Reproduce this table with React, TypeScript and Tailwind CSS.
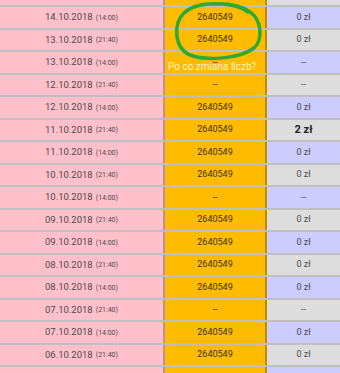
const rows: { date: string; time: string; num: string; amount: string }[] = [
  { date: '14.10.2018', time: '21:40', num: '2640549', amount: '0 zł' },
  { date: '14.10.2018', time: '14:00', num: '2640549', amount: '0 zł' },
  { date: '13.10.2018', time: '21:40', num: '2640549', amount: '0 zł' },
  { date: '13.10.2018', time: '14:00', num: '--', amount: '--' },
  { date: '12.10.2018', time: '21:40', num: '--', amount: '--' },
  { date: '12.10.2018', time: '14:00', num: '2640549', amount: '0 zł' },
  { date: '11.10.2018', time: '21:40', num: '2640549', amount: '2 zł' },
  { date: '11.10.2018', time: '14:00', num: '2640549', amount: '0 zł' },
  { date: '10.10.2018', time: '21:40', num: '2640549', amount: '0 zł' },
  { date: '10.10.2018', time: '14:00', num: '--', amount: '--' },
  { date: '09.10.2018', time: '21:40', num: '2640549', amount: '0 zł' },
  { date: '09.10.2018', time: '14:00', num: '2640549', amount: '0 zł' },
  { date: '08.10.2018', time: '21:40', num: '2640549', amount: '0 zł' },
  { date: '08.10.2018', time: '14:00', num: '2640549', amount: '0 zł' },
  { date: '07.10.2018', time: '21:40', num: '--', amount: '--' },
  { date: '07.10.2018', time: '14:00', num: '2640549', amount: '0 zł' },
  { date: '06.10.2018', time: '21:40', num: '2640549', amount: '0 zł' },
  { date: '06.10.2018', time: '14:00', num: '2640549', amount: '0 zł' },
]

const Row = ({ date, time, num, amount }: (typeof rows)[number]) => {
  const evening = time === '21:40'
  const win = amount !== '0 zł' && amount !== '--'
  return (
    <div className="grid h-[22.5px] grid-cols-[165px_102px_1fr] border-b-2 border-black/25">
      <div className="flex items-center justify-center gap-[3px] border-r-2 border-black/25 bg-[#ffc0cb] text-[#4a4a4a]">
        <span className="text-[9.5px]">{date}</span>
        <span className="pt-[1px] text-[7px]">({time})</span>
      </div>
      <div className="flex items-center justify-center border-r-2 border-black/25 bg-[#ffbb00] text-[9px] text-[#3a3320]">
        {num}
      </div>
      <div
        className={
          'flex items-center justify-center text-[#4a4a4a] ' +
          (evening ? 'bg-[#dddddd] ' : 'bg-[#ccccff] ') +
          (win ? 'text-[11px] font-bold text-[#222]' : 'text-[9px]')
        }
      >
        {amount}
      </div>
    </div>
  )
}

export default function App() {
  return (
    <div className="relative h-[373px] w-[340px] overflow-hidden bg-white font-['Roboto',sans-serif]">
      <div className="mt-[-15.5px]">
        {rows.map((r) => (
          <Row key={r.date + r.time} {...r} />
        ))}
      </div>

      <span className="absolute left-[168px] top-[59px] text-[10px] text-[#fff4c8]">Po co zmiana liczb?</span>

      <svg className="absolute left-0 top-0" width="340" height="80" viewBox="0 0 340 80" fill="none">
        <path
          d="M248 12 C234 2 198 0 184 13 C173 24 174 48 190 55 C206 61 240 59 254 48 C263 40 262 20 250 12 C242 6 228 3 212 4"
          stroke="#2eaa33"
          strokeWidth="3.5"
          strokeLinecap="round"
        />
      </svg>
    </div>
  )
}
